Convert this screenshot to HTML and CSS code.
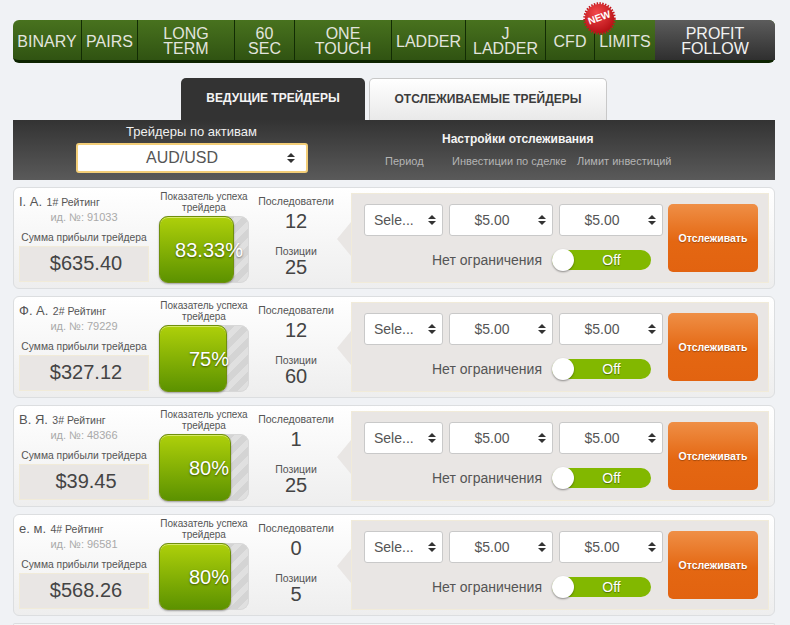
FILE: index.html
```html
<!DOCTYPE html>
<html lang="ru">
<head>
    <meta charset="UTF-8">
    <title>Трейдеры</title>
    <link rel="stylesheet" href="styles.css">
</head>
<body>
    <!-- Top nav -->
    <nav class="nav">
        <a class="nav-item">BINARY</a>
        <a class="nav-item">PAIRS</a>
        <a class="nav-item">LONG<br>TERM</a>
        <a class="nav-item">60<br>SEC</a>
        <a class="nav-item">ONE<br>TOUCH</a>
        <a class="nav-item">LADDER</a>
        <a class="nav-item">J<br>LADDER</a>
        <a class="nav-item">CFD</a>
        <a class="nav-item">LIMITS</a>
        <a class="nav-item nav-active">PROFIT<br>FOLLOW</a>
        <div class="new-badge">
            <svg width="33" height="33" viewBox="0 0 34 34">
                <defs>
                    <radialGradient id="badgeRed" cx="40%" cy="30%" r="75%">
                        <stop offset="0" stop-color="#f2474a"/>
                        <stop offset="1" stop-color="#b30d12"/>
                    </radialGradient>
                </defs>
                <circle cx="17" cy="17" r="15.5" fill="none" stroke="#c4161b" stroke-width="2.4" stroke-dasharray="1.5 1.4"/>
                <circle cx="17" cy="17" r="15" fill="url(#badgeRed)"/>
            </svg>
            <span class="new-text">NEW</span>
        </div>
    </nav>

    <!-- Tabs -->
    <div class="tabs">
        <div class="tab tab-active">ВЕДУЩИЕ ТРЕЙДЕРЫ</div>
        <div class="tab">ОТСЛЕЖИВАЕМЫЕ ТРЕЙДЕРЫ</div>
    </div>

    <!-- Table header -->
    <div class="head">
        <div class="head-asset">
            <div class="head-label">Трейдеры по активам</div>
            <div class="asset-select">AUD/USD<span class="arrows"></span></div>
        </div>
        <div class="head-settings">
            <div class="head-title">Настройки отслеживания</div>
            <div class="head-cols">
                <span class="col-period">Период</span>
                <span class="col-invest">Инвестиции по сделке</span>
                <span>Лимит инвестиций</span>
            </div>
        </div>
    </div>

    <!-- Trader cards -->
    <div class="card">
        <div class="info">
            <div class="name-line"><span class="name">I. А.</span> <span class="rank">1# Рейтинг</span></div>
            <div class="trader-id">ид. №: 91033</div>
            <div class="profit-label">Сумма прибыли трейдера</div>
            <div class="profit">$635.40</div>
        </div>
        <div class="meter">
            <div class="meter-label">Показатель успеха трейдера</div>
            <div class="bar"><div class="bar-fill" style="width: 83.33%"></div><span class="bar-text">83.33%</span></div>
        </div>
        <div class="stats">
            <div class="stat-label">Последователи</div>
            <div class="stat-num">12</div>
            <div class="stat-label stat-second">Позиции</div>
            <div class="stat-num">25</div>
        </div>
        <div class="panel">
            <div class="controls">
                <div class="selects">
                    <div class="select sel-period">Sele...<span class="arrows"></span></div>
                    <div class="select sel-money">$5.00<span class="arrows"></span></div>
                    <div class="select sel-money">$5.00<span class="arrows"></span></div>
                </div>
                <div class="limit">
                    <span class="limit-label">Нет ограничения</span>
                    <div class="toggle"><span class="knob"></span>Off</div>
                </div>
            </div>
            <button class="follow">Отслеживать</button>
        </div>
    </div>

    <div class="card">
        <div class="info">
            <div class="name-line"><span class="name">Ф. А.</span> <span class="rank">2# Рейтинг</span></div>
            <div class="trader-id">ид. №: 79229</div>
            <div class="profit-label">Сумма прибыли трейдера</div>
            <div class="profit">$327.12</div>
        </div>
        <div class="meter">
            <div class="meter-label">Показатель успеха трейдера</div>
            <div class="bar"><div class="bar-fill" style="width: 75%"></div><span class="bar-text">75%</span></div>
        </div>
        <div class="stats">
            <div class="stat-label">Последователи</div>
            <div class="stat-num">12</div>
            <div class="stat-label stat-second">Позиции</div>
            <div class="stat-num">60</div>
        </div>
        <div class="panel">
            <div class="controls">
                <div class="selects">
                    <div class="select sel-period">Sele...<span class="arrows"></span></div>
                    <div class="select sel-money">$5.00<span class="arrows"></span></div>
                    <div class="select sel-money">$5.00<span class="arrows"></span></div>
                </div>
                <div class="limit">
                    <span class="limit-label">Нет ограничения</span>
                    <div class="toggle"><span class="knob"></span>Off</div>
                </div>
            </div>
            <button class="follow">Отслеживать</button>
        </div>
    </div>

    <div class="card">
        <div class="info">
            <div class="name-line"><span class="name">В. Я.</span> <span class="rank">3# Рейтинг</span></div>
            <div class="trader-id">ид. №: 48366</div>
            <div class="profit-label">Сумма прибыли трейдера</div>
            <div class="profit">$39.45</div>
        </div>
        <div class="meter">
            <div class="meter-label">Показатель успеха трейдера</div>
            <div class="bar"><div class="bar-fill" style="width: 80%"></div><span class="bar-text">80%</span></div>
        </div>
        <div class="stats">
            <div class="stat-label">Последователи</div>
            <div class="stat-num">1</div>
            <div class="stat-label stat-second">Позиции</div>
            <div class="stat-num">25</div>
        </div>
        <div class="panel">
            <div class="controls">
                <div class="selects">
                    <div class="select sel-period">Sele...<span class="arrows"></span></div>
                    <div class="select sel-money">$5.00<span class="arrows"></span></div>
                    <div class="select sel-money">$5.00<span class="arrows"></span></div>
                </div>
                <div class="limit">
                    <span class="limit-label">Нет ограничения</span>
                    <div class="toggle"><span class="knob"></span>Off</div>
                </div>
            </div>
            <button class="follow">Отслеживать</button>
        </div>
    </div>

    <div class="card">
        <div class="info">
            <div class="name-line"><span class="name">е. м.</span> <span class="rank">4# Рейтинг</span></div>
            <div class="trader-id">ид. №: 96581</div>
            <div class="profit-label">Сумма прибыли трейдера</div>
            <div class="profit">$568.26</div>
        </div>
        <div class="meter">
            <div class="meter-label">Показатель успеха трейдера</div>
            <div class="bar"><div class="bar-fill" style="width: 80%"></div><span class="bar-text">80%</span></div>
        </div>
        <div class="stats">
            <div class="stat-label">Последователи</div>
            <div class="stat-num">0</div>
            <div class="stat-label stat-second">Позиции</div>
            <div class="stat-num">5</div>
        </div>
        <div class="panel">
            <div class="controls">
                <div class="selects">
                    <div class="select sel-period">Sele...<span class="arrows"></span></div>
                    <div class="select sel-money">$5.00<span class="arrows"></span></div>
                    <div class="select sel-money">$5.00<span class="arrows"></span></div>
                </div>
                <div class="limit">
                    <span class="limit-label">Нет ограничения</span>
                    <div class="toggle"><span class="knob"></span>Off</div>
                </div>
            </div>
            <button class="follow">Отслеживать</button>
        </div>
    </div>

    <div class="card card-cut"></div>
</body>
</html>
```

FILE: styles.css
```css
/* General */
html, body {
    height: 625px;
    overflow: hidden;
}

body {
    box-sizing: border-box;
    margin: 0;
    padding: 20px 15px 0 13px;
    background-color: #f0f2f5;
    font-family: "Liberation Sans", Arial, sans-serif;
    color: #444;
}

/* Nav */
.nav {
    position: relative;
    display: grid;
    grid-template-columns: 68px 56px 97px 60px 97px 74px 80px 49px 61px 120px;
    height: 43px;
    box-sizing: border-box;
    border-bottom: 3px solid #0d2400;
    border-radius: 6px;
    background: linear-gradient(#48721e, #305312);
}

.nav-item {
    display: flex;
    align-items: center;
    justify-content: center;
    text-align: center;
    padding-top: 2px;
    font-size: 16px;
    line-height: 15px;
    color: #e2e4de;
    border-left: 1px solid #122c04;
    box-sizing: border-box;
}

.nav-item:first-child {
    border-left: none;
}

.nav-active {
    color: #f2f2f2;
    background: linear-gradient(#5c5c5c, #2f2f2f);
    border-left: none;
    border-radius: 0 6px 0 0;
}

.new-badge {
    position: absolute;
    left: 570px;
    top: -18px;
    width: 33px;
    height: 33px;
}

.new-text {
    position: absolute;
    left: 0;
    top: 10px;
    width: 33px;
    text-align: center;
    font-size: 10px;
    font-weight: bold;
    line-height: 12px;
    color: #fff;
    transform: rotate(-20deg);
}

/* Tabs */
.tabs {
    display: flex;
    gap: 4px;
    margin: 15px 0 0 168px;
}

.tab {
    width: 238px;
    height: 42px;
    box-sizing: border-box;
    border: 1px solid #c8c8c8;
    border-bottom: none;
    border-radius: 5px 5px 0 0;
    background: linear-gradient(#fff, #e9e9e9);
    text-align: center;
    font-size: 12px;
    font-weight: bold;
    line-height: 41px;
    color: #3d3d3d;
}

.tab-active {
    width: 184px;
    border: none;
    background: #333;
    color: #f4f4f4;
}

/* Table header */
.head {
    display: flex;
    height: 60px;
    background: linear-gradient(#333, #5a5a5a);
}

.head-asset {
    width: 357px;
    padding-top: 4px;
    text-align: center;
    box-sizing: border-box;
}

.head-label {
    font-size: 13px;
    line-height: 16px;
    color: #f0f0f0;
    margin-bottom: 3px;
}

.asset-select {
    position: relative;
    box-sizing: border-box;
    width: 232px;
    height: 30px;
    margin-left: 63px;
    padding-right: 20px;
    border: 2px solid #f3ce78;
    border-radius: 3px;
    background-color: #fff;
    font-size: 16px;
    line-height: 25px;
    color: #555;
}

.head-settings {
    flex: 1;
    padding-top: 12px;
}

.head-title {
    font-size: 12px;
    font-weight: bold;
    line-height: 15px;
    margin-left: 72px;
    color: #f4f4f4;
}

.head-cols {
    display: flex;
    margin-top: 7px;
    margin-left: 15px;
    font-size: 11px;
    line-height: 14px;
    color: #b4b4b4;
}

.col-period {
    width: 67px;
}

.col-invest {
    width: 125px;
}

/* Select arrows */
.arrows {
    position: absolute;
    right: 11px;
    top: 50%;
    width: 8px;
    height: 10px;
    margin-top: -5px;
}

.arrows::before,
.arrows::after {
    content: "";
    position: absolute;
    left: 0;
    border-left: 4px solid transparent;
    border-right: 4px solid transparent;
}

.arrows::before {
    top: 0;
    border-bottom: 4px solid #333;
}

.arrows::after {
    bottom: 0;
    border-top: 4px solid #333;
}

/* Trader cards */
.card {
    display: flex;
    box-sizing: border-box;
    height: 102px;
    margin-top: 7px;
    padding: 5px 5px 0;
    border: 1px solid #dcdee0;
    border-radius: 6px;
    background: linear-gradient(#fff, #eeeeee);
}

.card-cut {
    height: 2px;
    padding: 0;
    border-bottom: none;
    border-radius: 6px 6px 0 0;
}

.info {
    flex: none;
    width: 130px;
    margin-top: -1px;
    text-align: center;
}

.name-line {
    text-align: left;
    height: 17px;
    line-height: 17px;
    white-space: nowrap;
}

.name {
    font-size: 13px;
    color: #555;
}

.rank {
    font-size: 10.5px;
    color: #555;
}

.trader-id {
    font-size: 11px;
    line-height: 14px;
    margin-top: 1px;
    color: #a9a9a9;
}

.profit-label {
    font-size: 10.3px;
    line-height: 12px;
    margin-top: 8px;
    color: #555;
}

.profit {
    box-sizing: border-box;
    height: 36px;
    margin-top: 2px;
    padding-left: 4px;
    border: 1px solid #f1ebd9;
    background-color: #e9e6e4;
    font-size: 20px;
    line-height: 33px;
    color: #444;
}

.meter {
    flex: none;
    width: 90px;
    margin-left: 10px;
}

.meter-label {
    font-size: 10px;
    line-height: 11px;
    height: 25px;
    margin-top: -2px;
    text-align: center;
    color: #555;
}

.bar {
    position: relative;
    height: 67px;
    border-radius: 9px;
    background: repeating-linear-gradient(135deg, #d4d4d4 0 6px, #e0e0e0 6px 12px);
    box-shadow: inset 0 0 0 1px #d8d8d8;
}

.bar-fill {
    box-sizing: border-box;
    height: 100%;
    border: 1px solid #6f8f0c;
    border-radius: 9px;
    background: linear-gradient(#aed00a, #5c9200);
    box-shadow: inset 0 1px 0 #d6e86a, 0 1px 2px rgba(0, 0, 0, 0.35);
}

.bar-text {
    position: absolute;
    left: 0;
    top: 22px;
    width: 100px;
    text-align: center;
    font-size: 20px;
    line-height: 24px;
    color: #fff;
    text-shadow: 0 1px 2px rgba(0, 0, 0, 0.5);
}

.stats {
    flex: none;
    box-sizing: border-box;
    width: 94px;
    padding-top: 2px;
    text-align: center;
}

.stat-label {
    font-size: 10.5px;
    line-height: 12px;
    color: #555;
}

.stat-second {
    margin-top: 11px;
}

.stat-num {
    font-size: 20px;
    line-height: 25px;
    margin-top: 2px;
    color: #444;
}

.stat-second + .stat-num {
    line-height: 20px;
    margin-top: 0;
}

/* Follow panel */
.panel {
    position: relative;
    display: flex;
    flex: none;
    box-sizing: border-box;
    width: 418px;
    height: 90px;
    margin-left: 8px;
    padding: 10px 10px 0 12px;
    border: 1px solid #f1ebd9;
    background-color: #e9e6e4;
}

.panel::before {
    content: "";
    position: absolute;
    left: -15px;
    top: 28px;
    border-top: 17px solid transparent;
    border-bottom: 17px solid transparent;
    border-right: 14px solid #e9e6e4;
}

.controls {
    flex: none;
    width: 299px;
}

.selects {
    display: flex;
    gap: 6px;
}

.select {
    position: relative;
    box-sizing: border-box;
    height: 32px;
    border: 1px solid #c9c9c9;
    border-radius: 3px;
    background-color: #fff;
    font-size: 14px;
    line-height: 30px;
    color: #555;
}

.sel-period {
    width: 79px;
    padding-left: 9px;
}

.sel-money {
    width: 104px;
    padding-right: 18px;
    text-align: center;
}

.select .arrows {
    right: 6px;
}

.limit {
    display: flex;
    align-items: center;
    margin-top: 14px;
    padding-left: 68px;
}

.limit-label {
    width: 120px;
    font-size: 14px;
    color: #555;
}

.toggle {
    position: relative;
    box-sizing: border-box;
    width: 99px;
    height: 20px;
    padding-left: 20px;
    border-radius: 10px;
    background-color: #82b800;
    text-align: center;
    font-size: 14px;
    line-height: 20px;
    color: #fff;
    text-shadow: 0 1px 1px rgba(0, 0, 0, 0.4);
}

.knob {
    position: absolute;
    left: 0;
    top: -1px;
    width: 22px;
    height: 22px;
    border-radius: 50%;
    background-color: #fff;
    box-shadow: 0 1px 2px rgba(0, 0, 0, 0.4);
}

.follow {
    flex: none;
    width: 90px;
    height: 68px;
    margin-left: 5px;
    padding: 0;
    border: none;
    border-radius: 5px;
    background: linear-gradient(#ef8f46 0, #e46712 55%, #e26310 100%);
    font-family: inherit;
    font-size: 10.5px;
    font-weight: bold;
    color: #fff;
    text-shadow: 0 1px 1px rgba(0, 0, 0, 0.3);
}
```
